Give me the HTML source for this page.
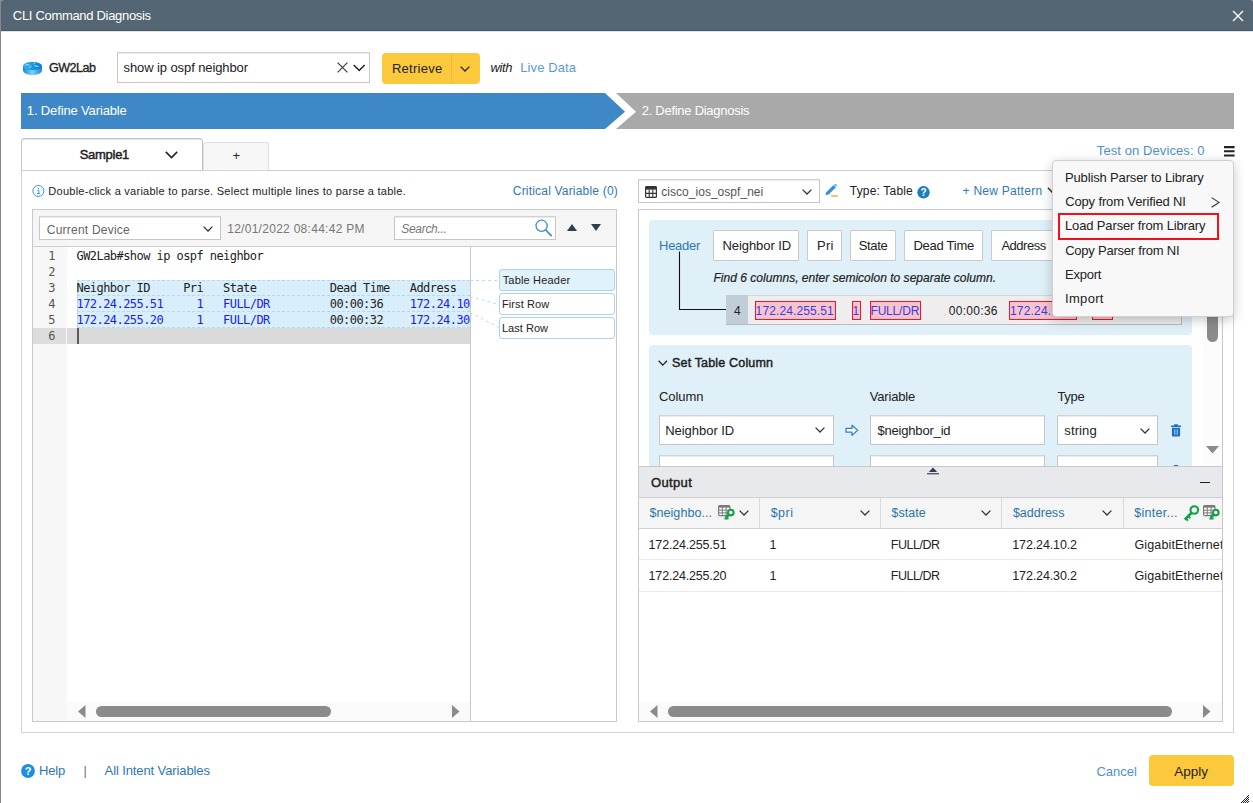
<!DOCTYPE html>
<html lang="en">
<head>
<meta charset="utf-8">
<title>CLI Command Diagnosis</title>
<style>
html,body{margin:0;padding:0;background:#fff;}
body{width:1253px;height:803px;overflow:hidden;font:13px/20px "Liberation Sans",sans-serif;color:#222;}
#app{position:relative;width:1253px;height:803px;overflow:hidden;background:#fff;}
.b{position:absolute;box-sizing:border-box;}
.t{position:absolute;white-space:pre;}
svg{position:absolute;overflow:visible;}
.inp{background:#fff;border:1px solid #c6c6c6;border-top-color:#d2d2d2;border-radius:1px;box-shadow:inset 0 1px 0 #ececec;}
.code{position:absolute;white-space:pre;font:12px/16px "DejaVu Sans Mono","Liberation Mono",monospace;color:#222;letter-spacing:-0.56px;}
.ln{position:absolute;white-space:pre;font:12px/16px "DejaVu Sans Mono","Liberation Mono",monospace;color:#555;width:20px;text-align:right;left:35.6px;}
.hl{background:#d8eefb;border:1px dashed #b3daf2;border-left:1px solid #b3daf2;border-right:none;}
.tag{background:#fff;border:1px solid #a9d3ee;border-radius:3px;}
.hb{background:#fff;border:1px solid #cacaca;border-radius:1px;}
.pk{background:#f8c4cc;border:1px solid #f0142c;}
.panel{background:#dff0f9;border-radius:4px;}
.thumb{background:#8b8b8b;border-radius:6px;}
.vl{background:#d9d9d9;width:1px;}
.hl1{background:#ebebeb;height:1px;}

</style>
</head>
<body>
<div id="app">
<!-- window frame -->
<div class="b" style="left:0;top:0;width:1253px;height:6px;background:#a3a7ab;"></div>
<div class="b" style="left:0;top:0;width:1px;height:803px;background:#85898e;"></div>
<div class="b" style="left:1px;top:0;width:1252px;height:31px;background:#546673;border-bottom:1px solid #475b69;border-radius:3px 3px 0 0;"></div>
<div class="b" style="left:1px;top:31px;width:1252px;height:1px;background:#dfe2e5;"></div>
<svg style="left:1232px;top:10px" width="12" height="12" viewBox="0 0 12 12"><path d="M1 1L11 11M11 1L1 11" stroke="#fff" stroke-width="1.4" fill="none"/></svg>

<!-- device row -->
<div class="b" style="left:23px;top:66px;width:19px;height:9.4px;background:linear-gradient(90deg,#1787d3 0%,#7ad1ff 48%,#1787d3 100%);border-radius:0 0 9.5px 9.5px / 0 0 4.4px 4.4px;"></div>
<div class="b" style="left:23px;top:61.5px;width:19px;height:8.8px;background:linear-gradient(90deg,#2bb2f6,#0c7ccb);border-radius:50%;"></div>
<svg style="left:23px;top:61.4px" width="19" height="14" viewBox="0 0 19 14"><path d="M2.4 3.9H6.6M10.6 2.8L12 2.1M6.2 6.6L8.4 5.2M11.4 4.6L15.6 5.6" stroke="#cfe9f8" stroke-width="0.9" fill="none"/></svg>
<div class="b inp" style="left:117px;top:52px;width:253px;height:31px;"></div>
<svg style="left:337px;top:61.8px" width="11" height="11" viewBox="0 0 11 11"><path d="M0.6 0.6L10.4 10.4M10.4 0.6L0.6 10.4" stroke="#444" stroke-width="1.3" fill="none"/></svg>
<svg style="left:352.6px;top:63.6px" width="12.4" height="8" viewBox="0 0 12 8" preserveAspectRatio="none"><path d="M0.7 0.9L6 6.4L11.3 0.9" stroke="#222" stroke-width="1.5" fill="none"/></svg>
<div class="b" style="left:382px;top:53px;width:98px;height:31px;background:#fdc93c;border-radius:4px;"></div>
<div class="b" style="left:451px;top:53px;width:1px;height:31px;background:#f1b845;"></div>
<svg style="left:460.2px;top:66px" width="10" height="6" viewBox="0 0 10 6"><path d="M0.6 0.6L5 5L9.4 0.6" stroke="#222" stroke-width="1.3" fill="none"/></svg>

<!-- steps -->
<svg style="left:21px;top:93px" width="1213" height="36" viewBox="0 0 1213 36">
  <path d="M0 0H584L604 18.7L584 36H0Z" fill="#3f88c8"/>
  <path d="M595 0H1213V36H595L615 18.7Z" fill="#a9a9a9"/>
</svg>

<!-- tabs -->
<div class="b" style="left:21px;top:170px;width:1213px;height:563px;border:1px solid #d0d4d9;border-top-color:#c9cdd2;"></div>
<div class="b" style="left:203px;top:142px;width:66px;height:29px;background:#f7f7f7;border:1px solid #dcdfe3;border-bottom-color:#d3d7dc;border-radius:3px 3px 0 0;"></div>
<div class="b" style="left:21px;top:138px;width:182px;height:33px;background:#fff;border:1px solid #bfc4ca;border-bottom-color:#c9cdd2;border-radius:4px 4px 0 0;box-shadow:inset 0 1px 0 #e6e8ea;"></div>
<svg style="left:165px;top:151px" width="13" height="8" viewBox="0 0 13 8"><path d="M0.8 0.9L6.5 6.6L12.2 0.9" stroke="#222" stroke-width="1.5" fill="none"/></svg>

<!-- left: info -->
<svg style="left:32px;top:185px" width="13" height="13" viewBox="0 0 13 13"><circle cx="6.4" cy="6" r="5.5" fill="#fff" stroke="#3a97dc" stroke-width="1"/><rect x="5.8" y="2.8" width="1.3" height="1.3" fill="#3a97dc"/><path d="M5.2 5.3H6.9V8.6M5 8.7H8" stroke="#3a97dc" stroke-width="1" fill="none"/></svg>

<!-- left: editor box -->
<div class="b" style="left:32px;top:209px;width:585px;height:513px;border:1px solid #c9c9c9;background:#fff;"></div>
<div class="b" style="left:33px;top:210px;width:583px;height:37px;background:#f5f5f5;border-bottom:1px solid #cfcfcf;"></div>
<div class="b inp" style="left:39px;top:216px;width:182px;height:24px;"></div>
<svg style="left:203px;top:225.5px" width="10" height="6" viewBox="0 0 10 6"><path d="M0.6 0.6L5 5L9.4 0.6" stroke="#333" stroke-width="1.3" fill="none"/></svg>
<div class="b inp" style="left:394px;top:216px;width:162px;height:24px;"></div>
<svg style="left:534px;top:218px" width="20" height="20" viewBox="0 0 20 20"><circle cx="7.6" cy="7.8" r="5.6" fill="none" stroke="#3a8fc6" stroke-width="1.3"/><path d="M11.8 12L17.2 17.6" stroke="#3a8fc6" stroke-width="1.7" stroke-linecap="round"/></svg>
<svg style="left:567px;top:224px" width="10" height="7" viewBox="0 0 10 7"><path d="M0 7H10L5 0Z" fill="#2f3e4d"/></svg>
<svg style="left:591px;top:224px" width="10" height="7" viewBox="0 0 10 7"><path d="M0 0H10L5 7Z" fill="#2f3e4d"/></svg>

<!-- code area -->
<div class="b" style="left:33px;top:247px;width:34px;height:474px;background:#f7f7f7;"></div>
<div class="b" style="left:470px;top:247px;width:1px;height:474px;background:#c9c9c9;"></div>
<div class="b" style="left:33px;top:328px;width:33px;height:16px;background:#dddddd;"></div>
<div class="b" style="left:67px;top:328px;width:403px;height:16px;background:#dadada;"></div>
<div class="b" style="left:77px;top:328px;width:2px;height:16px;background:#5a5a5a;"></div>
<div class="b" style="left:76px;top:247px;width:394px;height:120px;overflow:hidden;">
  <div class="b hl" style="left:1px;top:33px;width:393px;height:16px;"></div>
  <div class="b hl" style="left:1px;top:49px;width:393px;height:16px;border-top:none;"></div>
  <div class="b hl" style="left:1px;top:65px;width:393px;height:16px;border-top:none;"></div>
  <div class="code" style="left:0.5px;top:1px;">GW2Lab#show ip ospf neighbor</div>
  <div class="code" style="left:0.5px;top:33px;">Neighbor ID     Pri   State           Dead Time   Address         Interface</div>
  <div class="code" style="left:0.5px;top:49px;color:#1c1cf0;">172.24.255.51     1   FULL/DR         <span style="color:#222">00:00:36</span>    172.24.10.2     GigabitEthernet0/1</div>
  <div class="code" style="left:0.5px;top:65px;color:#1c1cf0;">172.24.255.20     1   FULL/DR         <span style="color:#222">00:00:32</span>    172.24.30.2     GigabitEthernet0/2</div>
</div>
<div class="ln" style="top:248px;">1</div>
<div class="ln" style="top:264px;">2</div>
<div class="ln" style="top:280px;">3</div>
<div class="ln" style="top:296px;">4</div>
<div class="ln" style="top:312px;">5</div>
<div class="ln" style="top:328px;">6</div>

<!-- connectors + tags -->
<svg style="left:470px;top:270px" width="32" height="70" viewBox="0 0 32 70"><path d="M0 10.5H30M0 26.5L30 35M0 42.5L30 58" stroke="#b9def3" stroke-width="1" stroke-dasharray="3 3" fill="none"/></svg>
<div class="b tag" style="left:499px;top:269px;width:116px;height:22px;background:#e0f2fb;"></div>
<div class="b tag" style="left:499px;top:293px;width:116px;height:22px;"></div>
<div class="b tag" style="left:499px;top:317px;width:116px;height:22px;"></div>

<!-- left h-scrollbar -->
<div class="b" style="left:67px;top:702px;width:403px;height:19px;background:#fafafa;"></div>
<svg style="left:77.5px;top:705px" width="8" height="13" viewBox="0 0 8 13"><path d="M7.5 0V13L0 6.5Z" fill="#8b8b8b"/></svg>
<div class="b thumb" style="left:96px;top:706px;width:235px;height:11px;"></div>
<svg style="left:451.5px;top:705px" width="8" height="13" viewBox="0 0 8 13"><path d="M0 0V13L7.5 6.5Z" fill="#8b8b8b"/></svg>

<!-- right: top controls -->
<div class="b inp" style="left:638px;top:179px;width:182px;height:24px;"></div>
<svg style="left:645px;top:186px" width="12" height="12" viewBox="0 0 12 12"><rect x="0.6" y="0.6" width="10.8" height="10.8" rx="1" fill="none" stroke="#333" stroke-width="1.2"/><rect x="0.6" y="0.6" width="10.8" height="3" fill="#333"/><path d="M0.6 7.4H11.4M4.2 3.6V11.4M7.8 3.6V11.4" stroke="#333" stroke-width="1.1"/></svg>
<svg style="left:802px;top:188.5px" width="10" height="6" viewBox="0 0 10 6"><path d="M0.6 0.6L5 5L9.4 0.6" stroke="#333" stroke-width="1.3" fill="none"/></svg>
<svg style="left:825px;top:184px" width="14" height="14" viewBox="0 0 14 14"><path d="M0.5 11.2L1.3 8.2L8.6 0.9L11 3.3L3.7 10.6Z" fill="#2f8fe3"/><path d="M9.3 0.5L10.2 -0.2L12 1.6L11.4 2.6Z" fill="#2f8fe3"/><rect x="6.2" y="11.3" width="6.6" height="1.4" fill="#f5a623"/></svg>
<svg style="left:917px;top:185.5px" width="13" height="13" viewBox="0 0 13 13"><circle cx="6.5" cy="6.3" r="6.2" fill="#1b7cc2"/><text x="6.5" y="10" text-anchor="middle" font-family="Liberation Sans, sans-serif" font-weight="700" font-size="10" fill="#fff">?</text></svg>
<svg style="left:1223.5px;top:146px" width="11" height="11" viewBox="0 0 11 11"><path d="M0 1.1H10.6M0 5.3H10.6M0 9.5H10.6" stroke="#222" stroke-width="2.1"/></svg>

<svg style="left:1046.8px;top:186.8px" width="11" height="7" viewBox="0 0 9 6"><path d="M0.6 0.6L4.5 4.8L8.4 0.6" stroke="#333" stroke-width="1.2" fill="none"/></svg>
<!-- right: pattern box -->
<div class="b" style="left:638px;top:209px;width:585px;height:513px;border:1px solid #c9c9c9;background:#fff;"></div>
<div class="b" style="left:1203px;top:210px;width:19px;height:256px;background:#fcfcfc;"></div>
<div class="b thumb" style="left:1206.5px;top:232px;width:11.5px;height:110px;"></div>
<svg style="left:1205.5px;top:446px" width="13" height="8" viewBox="0 0 13 8"><path d="M0 0H13L6.5 7.5Z" fill="#8b8b8b"/></svg>

<div class="b panel" style="left:649px;top:220px;width:543px;height:115px;"></div>
<div class="b hb" style="left:713px;top:230px;width:86px;height:31px;"></div>
<div class="b hb" style="left:807px;top:230px;width:35px;height:31px;"></div>
<div class="b hb" style="left:850px;top:230px;width:46px;height:31px;"></div>
<div class="b hb" style="left:904px;top:230px;width:79px;height:31px;"></div>
<div class="b hb" style="left:991px;top:230px;width:64px;height:31px;"></div>
<svg style="left:670px;top:250px" width="60" height="64" viewBox="0 0 60 64"><path d="M9.5 1.5V59.5H56" stroke="#111" stroke-width="1.1" fill="none"/></svg>
<div class="b" style="left:726px;top:295px;width:456px;height:30px;background:#efeded;border:1px solid #d5d5d5;border-right-color:#bdbdbd;border-bottom-color:#bdbdbd;"></div>
<div class="b" style="left:726px;top:295px;width:22px;height:30px;background:#c1ced7;border-bottom:1px solid #b5bcc2;"></div>
<div class="b pk" style="left:754.5px;top:301px;width:81.5px;height:19px;"></div>
<div class="b pk" style="left:851.5px;top:301px;width:9.5px;height:19px;"></div>
<div class="b pk" style="left:869.5px;top:301px;width:51.5px;height:19px;"></div>
<div class="b pk" style="left:1009px;top:301px;width:68px;height:19px;"></div>
<div class="b pk" style="left:1092px;top:301px;width:21px;height:19px;"></div>

<div class="b panel" style="left:649px;top:345px;width:543px;height:125px;border-radius:4px 4px 0 0;"></div>
<svg style="left:658.4px;top:360.1px" width="9.6" height="6.4" viewBox="0 0 9 6"><path d="M0.6 0.7L4.5 4.8L8.4 0.7" stroke="#222" stroke-width="1.2" fill="none"/></svg>
<div class="b inp" style="left:659px;top:415px;width:175px;height:30px;"></div>
<svg style="left:815.2px;top:427.3px" width="10" height="6" viewBox="0 0 10 6"><path d="M0.6 0.6L5 5L9.4 0.6" stroke="#333" stroke-width="1.3" fill="none"/></svg>
<svg style="left:844.9px;top:424px" width="14" height="13" viewBox="0 0 14 13"><path d="M1 4.4H7V1.2L12.6 6.3L7 11.4V8.2H1Z" fill="#fff" stroke="#2b7fc4" stroke-width="1.2" stroke-linejoin="round"/></svg>
<div class="b inp" style="left:870px;top:415px;width:175px;height:30px;"></div>
<div class="b inp" style="left:1057px;top:415px;width:101px;height:30px;"></div>
<svg style="left:1139.5px;top:427.5px" width="10" height="6" viewBox="0 0 10 6"><path d="M0.6 0.6L5 5L9.4 0.6" stroke="#333" stroke-width="1.3" fill="none"/></svg>
<svg style="left:1171px;top:424px" width="10" height="13" viewBox="0 0 10 13"><path d="M3.2 0.3H6.8V1.5H10V3H0V1.5H3.2Z" fill="#1a6fc4"/><path d="M0.9 3.8H9.1V11.2A1.3 1.3 0 0 1 7.8 12.5H2.2A1.3 1.3 0 0 1 0.9 11.2Z" fill="#1a6fc4"/><path d="M3.8 5.3V10.8M6.2 5.3V10.8" stroke="#bfe0f7" stroke-width="0.9"/></svg>
<!-- second (cut) row -->
<div class="b inp" style="left:659px;top:455px;width:175px;height:20px;"></div>
<div class="b inp" style="left:870px;top:455px;width:175px;height:20px;"></div>
<div class="b inp" style="left:1057px;top:455px;width:101px;height:20px;"></div>
<div class="b" style="left:1174px;top:464.5px;width:4px;height:2px;background:#1a6fc4;"></div>

<!-- output panel -->
<div class="b" style="left:639px;top:466px;width:583px;height:255px;background:#fff;"></div>
<div class="b" style="left:639px;top:466px;width:583px;height:32px;background:#e8e9ed;border-top:1px solid #c9c9c9;border-bottom:1px solid #cfcfcf;"></div>
<svg style="left:926.5px;top:466.8px" width="12" height="8" viewBox="0 0 12 8"><rect x="0" y="7.3" width="12" height="0.9" fill="#fff"/><path d="M1.8 5H10.2L6 0.5Z" fill="#2f3e4d"/><rect x="0" y="6.2" width="12" height="1.2" fill="#2f3e4d"/></svg>
<div class="b" style="left:1199.5px;top:481.5px;width:10.5px;height:1.3px;background:#222;"></div>
<div class="b" style="left:639px;top:498px;width:583px;height:31px;background:#f5f5f5;border-bottom:1px solid #d0d0d0;"></div>
<div class="b vl" style="left:759px;top:498px;height:30px;"></div>
<div class="b vl" style="left:880px;top:498px;height:30px;"></div>
<div class="b vl" style="left:1001px;top:498px;height:30px;"></div>
<div class="b vl" style="left:1123px;top:498px;height:30px;"></div>
<div class="b hl1" style="left:639px;top:559px;width:583px;"></div>
<div class="b hl1" style="left:639px;top:591px;width:583px;"></div>
<svg style="left:738.5px;top:509.5px" width="10" height="6" viewBox="0 0 10 6"><path d="M0.6 0.6L5 5L9.4 0.6" stroke="#333" stroke-width="1.3" fill="none"/></svg>
<svg style="left:859.5px;top:509.5px" width="10" height="6" viewBox="0 0 10 6"><path d="M0.6 0.6L5 5L9.4 0.6" stroke="#333" stroke-width="1.3" fill="none"/></svg>
<svg style="left:980.5px;top:509.5px" width="10" height="6" viewBox="0 0 10 6"><path d="M0.6 0.6L5 5L9.4 0.6" stroke="#333" stroke-width="1.3" fill="none"/></svg>
<svg style="left:1102px;top:509.5px" width="10" height="6" viewBox="0 0 10 6"><path d="M0.6 0.6L5 5L9.4 0.6" stroke="#333" stroke-width="1.3" fill="none"/></svg>
<!-- table+key icon -->
<svg style="left:718px;top:505px" width="18" height="15" viewBox="0 0 18 15"><rect x="0.6" y="0.6" width="11.3" height="10" rx="1.2" fill="#fff" stroke="#7a7a7a" stroke-width="1.2"/><rect x="0.6" y="0.6" width="11.3" height="2" fill="#7a7a7a"/><path d="M0.6 5.2H11.9M0.6 7.9H11.9M4.3 2V10.6M8.1 2V10.6" stroke="#7a7a7a" stroke-width="1"/><circle cx="12.8" cy="7.6" r="2.8" fill="#fff" stroke="#12a14b" stroke-width="2.1"/><path d="M11 9.5L7.6 12.9" stroke="#12a14b" stroke-width="2.6"/><path d="M6.4 13.6H10.6" stroke="#12a14b" stroke-width="1.8"/></svg>
<svg style="left:1183px;top:504.5px" width="17" height="16" viewBox="0 0 17 16"><circle cx="11.3" cy="5" r="3.8" fill="none" stroke="#12a14b" stroke-width="2.1"/><path d="M8.6 7.7L1.8 14.6" stroke="#12a14b" stroke-width="2.7" fill="none"/><path d="M2.6 13.2L5 15.6M5 11L7.2 13.2" stroke="#12a14b" stroke-width="2" fill="none"/></svg>
<svg style="left:1203px;top:505px" width="18" height="15" viewBox="0 0 18 15"><rect x="0.6" y="0.6" width="11.3" height="10" rx="1.2" fill="#fff" stroke="#7a7a7a" stroke-width="1.2"/><rect x="0.6" y="0.6" width="11.3" height="2" fill="#7a7a7a"/><path d="M0.6 5.2H11.9M0.6 7.9H11.9M4.3 2V10.6M8.1 2V10.6" stroke="#7a7a7a" stroke-width="1"/><circle cx="12.8" cy="7.6" r="2.8" fill="#fff" stroke="#12a14b" stroke-width="2.1"/><path d="M11 9.5L7.6 12.9" stroke="#12a14b" stroke-width="2.6"/><path d="M6.4 13.6H10.6" stroke="#12a14b" stroke-width="1.8"/></svg>
<!-- right h-scrollbar -->
<div class="b" style="left:639px;top:702px;width:583px;height:19px;background:#fafafa;"></div>
<svg style="left:649.5px;top:705px" width="8" height="13" viewBox="0 0 8 13"><path d="M7.5 0V13L0 6.5Z" fill="#8b8b8b"/></svg>
<div class="b thumb" style="left:668px;top:706px;width:504px;height:11px;"></div>
<svg style="left:1203px;top:705px" width="8" height="13" viewBox="0 0 8 13"><path d="M0 0V13L7.5 6.5Z" fill="#8b8b8b"/></svg>

<!-- footer -->
<svg style="left:21px;top:763.6px" width="14" height="14" viewBox="0 0 14 14"><circle cx="7" cy="7" r="6.9" fill="#1b8fe0"/><text x="7" y="11" text-anchor="middle" font-family="Liberation Sans, sans-serif" font-weight="700" font-size="11" fill="#fff">?</text></svg>
<div class="b" style="left:1149px;top:755px;width:85px;height:31px;background:#fdc93c;border-radius:4px;"></div>
<svg style="left:1241px;top:795px" width="8" height="8" viewBox="0 0 8 8" fill="#222"><rect x="0" y="7" width="1" height="1"/><rect x="1" y="6" width="1" height="1"/><rect x="2" y="5" width="1" height="1"/><rect x="2" y="7" width="1" height="1"/><rect x="3" y="4" width="1" height="1"/><rect x="3" y="6" width="1" height="1"/><rect x="4" y="3" width="1" height="1"/><rect x="4" y="5" width="1" height="1"/><rect x="4" y="7" width="1" height="1"/><rect x="5" y="2" width="1" height="1"/><rect x="5" y="4" width="1" height="1"/><rect x="5" y="6" width="1" height="1"/><rect x="6" y="1" width="1" height="1"/><rect x="6" y="3" width="1" height="1"/><rect x="6" y="5" width="1" height="1"/><rect x="6" y="7" width="1" height="1"/><rect x="7" y="0" width="1" height="1"/><rect x="7" y="2" width="1" height="1"/><rect x="7" y="4" width="1" height="1"/><rect x="7" y="6" width="1" height="1"/></svg>

<!-- dropdown menu -->
<div class="b" style="left:1052px;top:160px;width:182px;height:157px;background:#f8f8f8;border:1px solid #d0d0d0;border-radius:4px;box-shadow:0 3px 12px rgba(0,0,0,0.22);z-index:10;"></div>
<div class="b" style="left:1058px;top:213px;width:161px;height:27px;border:2px solid #f0101c;z-index:11;"></div>
<svg style="left:1211px;top:197px;z-index:12" width="9" height="11" viewBox="0 0 9 11"><path d="M0.6 0.6L8 5.4L0.6 10.2" stroke="#333" stroke-width="1.1" fill="none"/></svg>

<span class="t" style="left:12.8px;top:6.0px;font:400 13px/20px 'Liberation Sans',sans-serif;color:#fff;letter-spacing:-0.31px;">CLI Command Diagnosis</span>
<span class="t" style="left:49.0px;top:59.0px;font:400 12.5px/19px 'Liberation Sans',sans-serif;-webkit-text-stroke:0.35px #222;color:#222;letter-spacing:-0.48px;">GW2Lab</span>
<span class="t" style="left:123.6px;top:58.0px;font:400 13px/20px 'Liberation Sans',sans-serif;color:#222;letter-spacing:-0.1px;">show ip ospf neighbor</span>
<span class="t" style="left:391.9px;top:59.0px;font:400 13px/20px 'Liberation Sans',sans-serif;color:#222;letter-spacing:0.26px;">Retrieve</span>
<span class="t" style="left:490.6px;top:58.0px;font:italic 400 13px/20px 'Liberation Sans',sans-serif;color:#222;letter-spacing:-0.43px;">with</span>
<span class="t" style="left:520.2px;top:58.0px;font:400 13px/20px 'Liberation Sans',sans-serif;color:#5b9bd5;letter-spacing:0.11px;">Live Data</span>
<span class="t" style="left:26.8px;top:101.0px;font:400 13px/20px 'Liberation Sans',sans-serif;color:#fff;letter-spacing:-0.14px;">1. Define Variable</span>
<span class="t" style="left:641.7px;top:101.0px;font:400 13px/20px 'Liberation Sans',sans-serif;color:#fff;letter-spacing:-0.27px;">2. Define Diagnosis</span>
<span class="t" style="left:79.7px;top:145.0px;font:400 13px/20px 'Liberation Sans',sans-serif;-webkit-text-stroke:0.45px #222;color:#222;letter-spacing:-0.28px;">Sample1</span>
<span class="t" style="left:232.6px;top:146.0px;font:400 13px/20px 'Liberation Sans',sans-serif;color:#222;">+</span>
<span class="t" style="left:48.3px;top:183.0px;font:400 11px/16px 'Liberation Sans',sans-serif;color:#222;letter-spacing:0.26px;">Double-click a variable to parse. Select multiple lines to parse a table.</span>
<span class="t" style="left:512.8px;top:182.0px;font:400 12px/18px 'Liberation Sans',sans-serif;color:#2d79b3;letter-spacing:0.19px;">Critical Variable (0)</span>
<span class="t" style="left:46.8px;top:221.0px;font:400 12px/18px 'Liberation Sans',sans-serif;color:#666;letter-spacing:0.22px;">Current Device</span>
<span class="t" style="left:227.2px;top:220.0px;font:400 12px/18px 'Liberation Sans',sans-serif;color:#777;letter-spacing:0.28px;">12/01/2022 08:44:42 PM</span>
<span class="t" style="left:401.2px;top:220.0px;font:italic 400 12px/18px 'Liberation Sans',sans-serif;color:#777;letter-spacing:-0.29px;">Search...</span>
<span class="t" style="left:502.7px;top:272.0px;font:400 11px/16px 'Liberation Sans',sans-serif;color:#222;letter-spacing:0.18px;">Table Header</span>
<span class="t" style="left:501.9px;top:296.0px;font:400 11px/16px 'Liberation Sans',sans-serif;color:#222;letter-spacing:0.11px;">First Row</span>
<span class="t" style="left:501.9px;top:320.0px;font:400 11px/16px 'Liberation Sans',sans-serif;color:#222;letter-spacing:0.04px;">Last Row</span>
<span class="t" style="left:661.3px;top:183.0px;font:400 12px/18px 'Liberation Sans',sans-serif;color:#555;letter-spacing:0.03px;">cisco_ios_ospf_nei</span>
<span class="t" style="left:849.8px;top:182.0px;font:400 12px/18px 'Liberation Sans',sans-serif;color:#222;letter-spacing:0.18px;">Type: Table</span>
<span class="t" style="left:962.5px;top:182.0px;font:400 12px/18px 'Liberation Sans',sans-serif;color:#2d79b3;letter-spacing:0.27px;">+ New Pattern</span>
<span class="t" style="left:1096.8px;top:141.0px;font:400 13px/20px 'Liberation Sans',sans-serif;color:#4f8fcb;letter-spacing:0.09px;">Test on Devices: 0</span>
<span class="t" style="left:659.1px;top:236.0px;font:400 13px/20px 'Liberation Sans',sans-serif;color:#2d79b3;letter-spacing:-0.3px;">Header</span>
<span class="t" style="left:722.4px;top:236.0px;font:400 13px/20px 'Liberation Sans',sans-serif;color:#222;letter-spacing:-0.06px;">Neighbor ID</span>
<span class="t" style="left:817.1px;top:236.0px;font:400 13px/20px 'Liberation Sans',sans-serif;color:#222;letter-spacing:0.2px;">Pri</span>
<span class="t" style="left:858.7px;top:236.0px;font:400 13px/20px 'Liberation Sans',sans-serif;color:#222;letter-spacing:-0.33px;">State</span>
<span class="t" style="left:913.4px;top:236.0px;font:400 13px/20px 'Liberation Sans',sans-serif;color:#222;letter-spacing:-0.25px;">Dead Time</span>
<span class="t" style="left:1001.4px;top:236.0px;font:400 13px/20px 'Liberation Sans',sans-serif;color:#222;letter-spacing:-0.47px;">Address</span>
<span class="t" style="left:713.5px;top:269.0px;font:italic 400 12px/18px 'Liberation Sans',sans-serif;-webkit-text-stroke:0.2px #222;color:#222;letter-spacing:0.02px;">Find 6 columns, enter semicolon to separate column.</span>
<span class="t" style="left:734.0px;top:302.0px;font:400 12px/18px 'Liberation Sans',sans-serif;color:#222;">4</span>
<span class="t" style="left:755.6px;top:302.0px;font:400 12px/18px 'Liberation Sans',sans-serif;color:#3a3af0;letter-spacing:0.12px;">172.24.255.51</span>
<span class="t" style="left:852.5px;top:302.0px;font:400 12px/18px 'Liberation Sans',sans-serif;color:#3a3af0;">1</span>
<span class="t" style="left:870.5px;top:302.0px;font:400 12px/18px 'Liberation Sans',sans-serif;color:#3a3af0;letter-spacing:-0.2px;">FULL/DR</span>
<span class="t" style="left:948.8px;top:302.0px;font:400 12px/18px 'Liberation Sans',sans-serif;color:#222;letter-spacing:0.29px;">00:00:36</span>
<span class="t" style="left:1009.9px;top:302.0px;font:400 12px/18px 'Liberation Sans',sans-serif;color:#3a3af0;letter-spacing:0.21px;">172.24.10.2</span>
<span class="t" style="left:672.0px;top:354.0px;font:400 12.5px/19px 'Liberation Sans',sans-serif;-webkit-text-stroke:0.45px #222;color:#222;letter-spacing:0.17px;">Set Table Column</span>
<span class="t" style="left:659.0px;top:387.0px;font:400 13px/20px 'Liberation Sans',sans-serif;color:#222;letter-spacing:-0.06px;">Column</span>
<span class="t" style="left:869.7px;top:387.0px;font:400 13px/20px 'Liberation Sans',sans-serif;color:#222;letter-spacing:-0.17px;">Variable</span>
<span class="t" style="left:1057.4px;top:387.0px;font:400 13px/20px 'Liberation Sans',sans-serif;color:#222;letter-spacing:-0.3px;">Type</span>
<span class="t" style="left:665.2px;top:421.0px;font:400 13px/20px 'Liberation Sans',sans-serif;color:#222;letter-spacing:-0.03px;">Neighbor ID</span>
<span class="t" style="left:877.4px;top:421.0px;font:400 13px/20px 'Liberation Sans',sans-serif;color:#222;letter-spacing:-0.18px;">$neighbor_id</span>
<span class="t" style="left:1064.3px;top:421.0px;font:400 13px/20px 'Liberation Sans',sans-serif;color:#222;letter-spacing:0.12px;">string</span>
<span class="t" style="left:651.0px;top:473.0px;font:400 13px/20px 'Liberation Sans',sans-serif;-webkit-text-stroke:0.45px #222;color:#222;letter-spacing:0.36px;">Output</span>
<span class="t" style="left:649.4px;top:504.0px;font:400 12.5px/19px 'Liberation Sans',sans-serif;color:#2a74a8;letter-spacing:0.08px;">$neighbo...</span>
<span class="t" style="left:770.7px;top:504.0px;font:400 12.5px/19px 'Liberation Sans',sans-serif;color:#2a74a8;letter-spacing:0.47px;">$pri</span>
<span class="t" style="left:891.5px;top:504.0px;font:400 12.5px/19px 'Liberation Sans',sans-serif;color:#2a74a8;letter-spacing:0.04px;">$state</span>
<span class="t" style="left:1012.9px;top:504.0px;font:400 12.5px/19px 'Liberation Sans',sans-serif;color:#2a74a8;letter-spacing:0.01px;">$address</span>
<span class="t" style="left:1134.2px;top:504.0px;font:400 12.5px/19px 'Liberation Sans',sans-serif;color:#2a74a8;letter-spacing:0.28px;">$inter...</span>
<span class="t" style="left:648.6px;top:536.0px;font:400 12.5px/19px 'Liberation Sans',sans-serif;color:#222;letter-spacing:-0.18px;">172.24.255.51</span>
<span class="t" style="left:769.6px;top:536.0px;font:400 12.5px/19px 'Liberation Sans',sans-serif;color:#222;">1</span>
<span class="t" style="left:890.8px;top:536.0px;font:400 12.5px/19px 'Liberation Sans',sans-serif;color:#222;letter-spacing:-0.47px;">FULL/DR</span>
<span class="t" style="left:1012.3px;top:536.0px;font:400 12.5px/19px 'Liberation Sans',sans-serif;color:#222;letter-spacing:-0.13px;">172.24.10.2</span>
<span class="t" style="left:1134.4px;top:536.0px;font:400 12.5px/19px 'Liberation Sans',sans-serif;color:#222;letter-spacing:0.15px;width:87.6px;overflow:hidden;">GigabitEthernet0/1</span>
<span class="t" style="left:648.6px;top:567.0px;font:400 12.5px/19px 'Liberation Sans',sans-serif;color:#222;letter-spacing:-0.18px;">172.24.255.20</span>
<span class="t" style="left:769.6px;top:567.0px;font:400 12.5px/19px 'Liberation Sans',sans-serif;color:#222;">1</span>
<span class="t" style="left:890.8px;top:567.0px;font:400 12.5px/19px 'Liberation Sans',sans-serif;color:#222;letter-spacing:-0.47px;">FULL/DR</span>
<span class="t" style="left:1012.3px;top:567.0px;font:400 12.5px/19px 'Liberation Sans',sans-serif;color:#222;letter-spacing:-0.13px;">172.24.30.2</span>
<span class="t" style="left:1134.4px;top:567.0px;font:400 12.5px/19px 'Liberation Sans',sans-serif;color:#222;letter-spacing:0.15px;width:87.6px;overflow:hidden;">GigabitEthernet0/2</span>
<span class="t" style="left:39.0px;top:761.0px;font:400 13px/20px 'Liberation Sans',sans-serif;color:#2d79b3;letter-spacing:-0.17px;">Help</span>
<span class="t" style="left:83.4px;top:761.0px;font:400 13px/20px 'Liberation Sans',sans-serif;color:#777;">|</span>
<span class="t" style="left:104.6px;top:761.0px;font:400 13px/20px 'Liberation Sans',sans-serif;color:#2d79b3;letter-spacing:-0.11px;">All Intent Variables</span>
<span class="t" style="left:1096.4px;top:762.0px;font:400 13px/20px 'Liberation Sans',sans-serif;color:#4f8fcb;letter-spacing:0.02px;">Cancel</span>
<span class="t" style="left:1174.3px;top:762.0px;font:400 13.5px/20px 'Liberation Sans',sans-serif;color:#222;">Apply</span>
<span class="t" style="left:1065.0px;top:168.0px;font:400 13px/20px 'Liberation Sans',sans-serif;color:#222;letter-spacing:-0.15px;z-index:20;">Publish Parser to Library</span>
<span class="t" style="left:1065.2px;top:192.0px;font:400 13px/20px 'Liberation Sans',sans-serif;color:#222;letter-spacing:-0.14px;z-index:20;">Copy from Verified NI</span>
<span class="t" style="left:1065.0px;top:216.0px;font:400 13px/20px 'Liberation Sans',sans-serif;color:#222;letter-spacing:-0.14px;z-index:20;">Load Parser from Library</span>
<span class="t" style="left:1065.2px;top:241.0px;font:400 13px/20px 'Liberation Sans',sans-serif;color:#222;letter-spacing:-0.23px;z-index:20;">Copy Parser from NI</span>
<span class="t" style="left:1065.0px;top:265.0px;font:400 13px/20px 'Liberation Sans',sans-serif;color:#222;letter-spacing:-0.24px;z-index:20;">Export</span>
<span class="t" style="left:1065.0px;top:289.0px;font:400 13px/20px 'Liberation Sans',sans-serif;color:#222;letter-spacing:0.32px;z-index:20;">Import</span>
</div>
</body>
</html>
